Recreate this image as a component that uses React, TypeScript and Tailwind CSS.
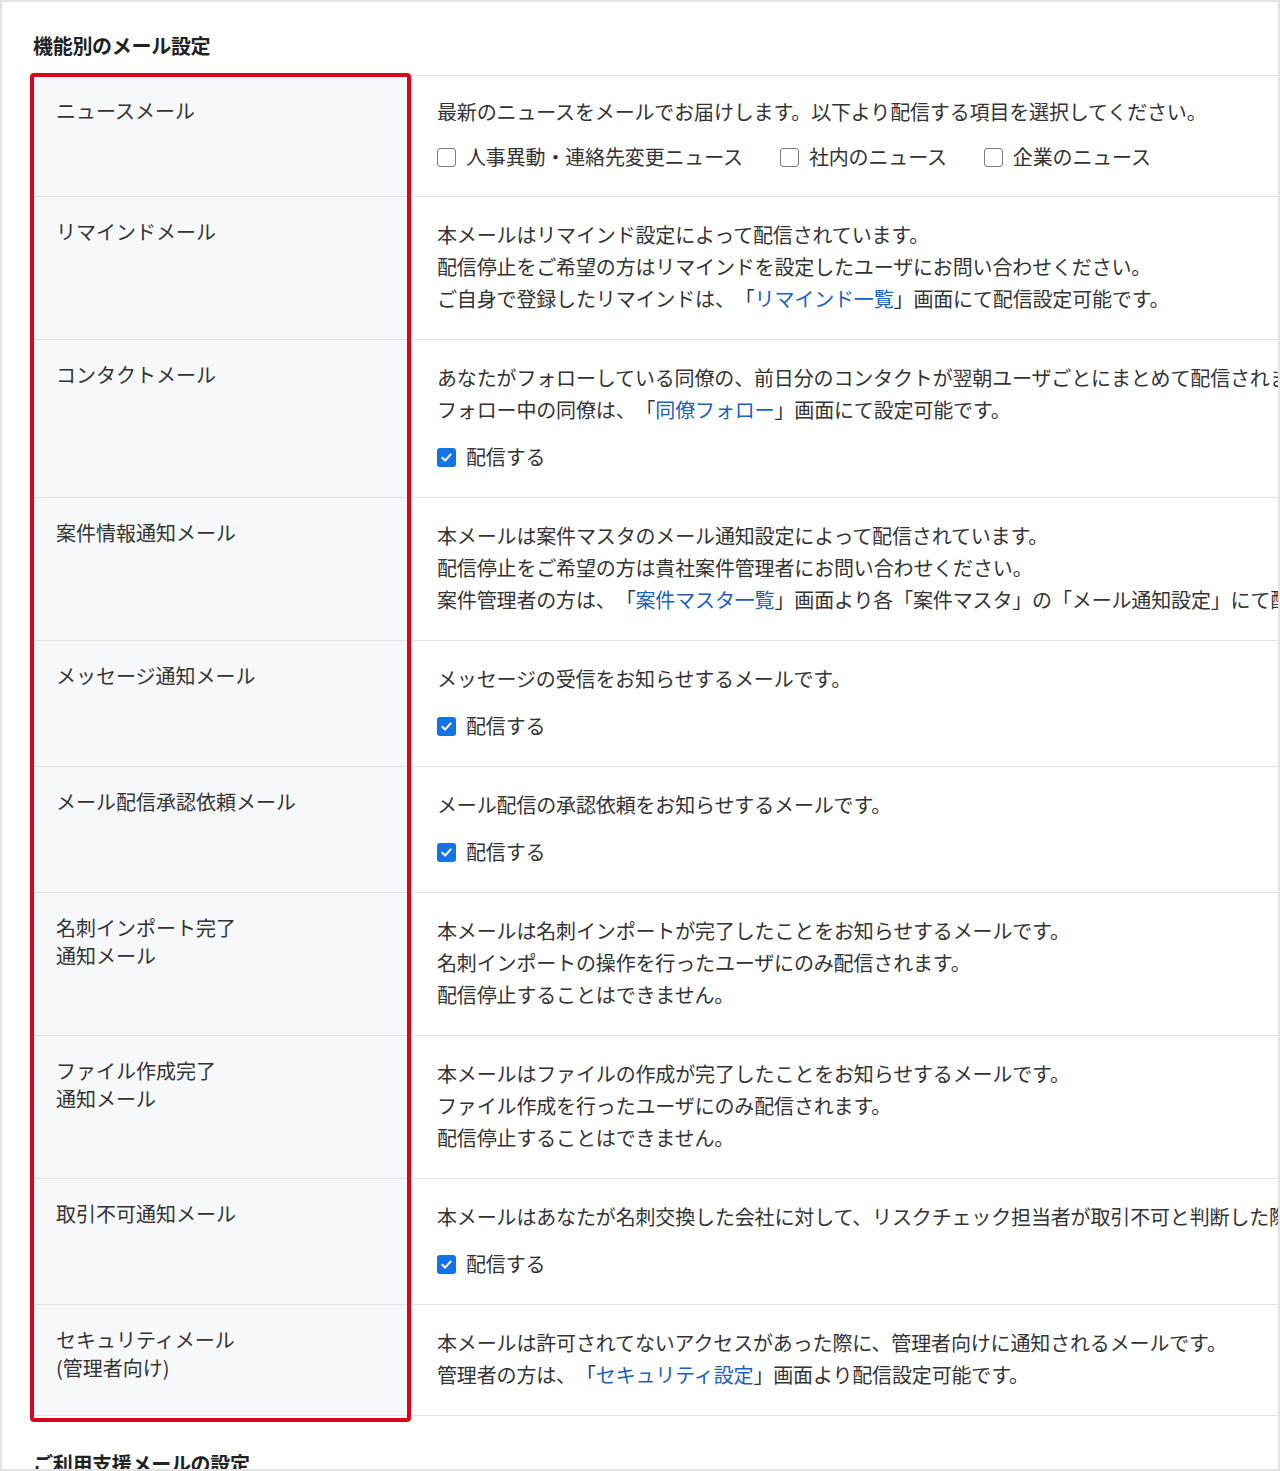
import type { ReactNode } from 'react'

type Row = {
  label: ReactNode
  lines: ReactNode[]
  checks?: { text: string; checked: boolean }[]
}

const Link = ({ children }: { children: ReactNode }) => (
  <span className="text-[#1b5fc1]">{children}</span>
)

const rows: Row[] = [
  {
    label: 'ニュースメール',
    lines: ['最新のニュースをメールでお届けします。以下より配信する項目を選択してください。'],
    checks: [
      { text: '人事異動・連絡先変更ニュース', checked: false },
      { text: '社内のニュース', checked: false },
      { text: '企業のニュース', checked: false },
    ],
  },
  {
    label: 'リマインドメール',
    lines: [
      '本メールはリマインド設定によって配信されています。',
      '配信停止をご希望の方はリマインドを設定したユーザにお問い合わせください。',
      <>ご自身で登録したリマインドは、「<Link>リマインド一覧</Link>」画面にて配信設定可能です。</>,
    ],
  },
  {
    label: 'コンタクトメール',
    lines: [
      'あなたがフォローしている同僚の、前日分のコンタクトが翌朝ユーザごとにまとめて配信されます。',
      <>フォロー中の同僚は、「<Link>同僚フォロー</Link>」画面にて設定可能です。</>,
    ],
    checks: [{ text: '配信する', checked: true }],
  },
  {
    label: '案件情報通知メール',
    lines: [
      '本メールは案件マスタのメール通知設定によって配信されています。',
      '配信停止をご希望の方は貴社案件管理者にお問い合わせください。',
      <>案件管理者の方は、「<Link>案件マスタ一覧</Link>」画面より各「案件マスタ」の「メール通知設定」にて配信設定可能です。</>,
    ],
  },
  {
    label: 'メッセージ通知メール',
    lines: ['メッセージの受信をお知らせするメールです。'],
    checks: [{ text: '配信する', checked: true }],
  },
  {
    label: 'メール配信承認依頼メール',
    lines: ['メール配信の承認依頼をお知らせするメールです。'],
    checks: [{ text: '配信する', checked: true }],
  },
  {
    label: <>名刺インポート完了<br />通知メール</>,
    lines: [
      '本メールは名刺インポートが完了したことをお知らせするメールです。',
      '名刺インポートの操作を行ったユーザにのみ配信されます。',
      '配信停止することはできません。',
    ],
  },
  {
    label: <>ファイル作成完了<br />通知メール</>,
    lines: [
      '本メールはファイルの作成が完了したことをお知らせするメールです。',
      'ファイル作成を行ったユーザにのみ配信されます。',
      '配信停止することはできません。',
    ],
  },
  {
    label: '取引不可通知メール',
    lines: ['本メールはあなたが名刺交換した会社に対して、リスクチェック担当者が取引不可と判断した際に配信されます。'],
    checks: [{ text: '配信する', checked: true }],
  },
  {
    label: <>セキュリティメール<br />(管理者向け)</>,
    lines: [
      '本メールは許可されてないアクセスがあった際に、管理者向けに通知されるメールです。',
      <>管理者の方は、「<Link>セキュリティ設定</Link>」画面より配信設定可能です。</>,
    ],
  },
]

function Checkbox({ checked }: { checked: boolean }) {
  if (checked) {
    return (
      <span className="flex h-[19px] w-[19px] items-center justify-center rounded-[3px] bg-[#1473e6]">
        <svg width="13" height="13" viewBox="0 0 14 14" fill="none">
          <path d="M2.5 7.3l3 3 6-6.6" stroke="white" strokeWidth="2.2" strokeLinecap="round" strokeLinejoin="round" />
        </svg>
      </span>
    )
  }
  return <span className="block h-[19px] w-[19px] rounded-[3px] border-[1.5px] border-[#7d7d7d] bg-white" />
}

export default function App() {
  return (
    <div className="h-[1471px] w-[1280px] overflow-hidden border-2 border-[#e3e3e3] bg-white font-['Noto_Sans_CJK_JP','Noto_Sans',sans-serif] text-[#333] [text-spacing-trim:space-all]">
      <div className="pl-[31px] pt-[30px]">
        <h2 className="text-[20px] font-bold leading-[28px] tracking-[-0.3px] text-[#222]">機能別のメール設定</h2>

        <div className="relative mt-[15px] w-[1400px]">
          <div className="border-t border-[#e3e3e3]">
            {rows.map((row, i) => (
              <div key={i} className="flex border-b border-[#e3e3e3]">
                <div className="w-[378px] shrink-0 bg-[#f7f8fa] pl-[23px] pt-[21px] text-[20px] leading-[28px]">
                  {row.label}
                </div>
                <div
                  className={
                    i === 0
                      ? 'flex-1 border-l border-[#e3e3e3] pb-[23px] pl-[25px] pt-5 text-[20px] leading-[32px] tracking-[-0.15px] whitespace-nowrap'
                      : 'flex-1 border-l border-[#e3e3e3] pb-6 pl-[25px] pt-[22px] text-[20px] leading-[32px] tracking-[-0.15px] whitespace-nowrap'
                  }
                >
                  {row.lines.map((line, j) => (
                    <div key={j}>{line}</div>
                  ))}
                  {row.checks && (
                    <div className={i === 0 ? 'mt-[13px] flex gap-[37px]' : 'mt-[15px] flex gap-[37px]'}>
                      {row.checks.map(c => (
                        <label key={c.text} className="flex items-center gap-[10px]">
                          <Checkbox checked={c.checked} />
                          <span>{c.text}</span>
                        </label>
                      ))}
                    </div>
                  )}
                </div>
              </div>
            ))}
          </div>
          {/* highlight frame over the label column */}
          <div className="pointer-events-none absolute -top-[2px] -bottom-[6px] -left-[3px] w-[381px] rounded-[4px] border-4 border-[#d8061d]" />
        </div>

        <h2 className="mt-[34px] text-[20px] font-bold leading-[28px] tracking-[-0.3px] text-[#222]">ご利用支援メールの設定</h2>
      </div>
    </div>
  )
}
